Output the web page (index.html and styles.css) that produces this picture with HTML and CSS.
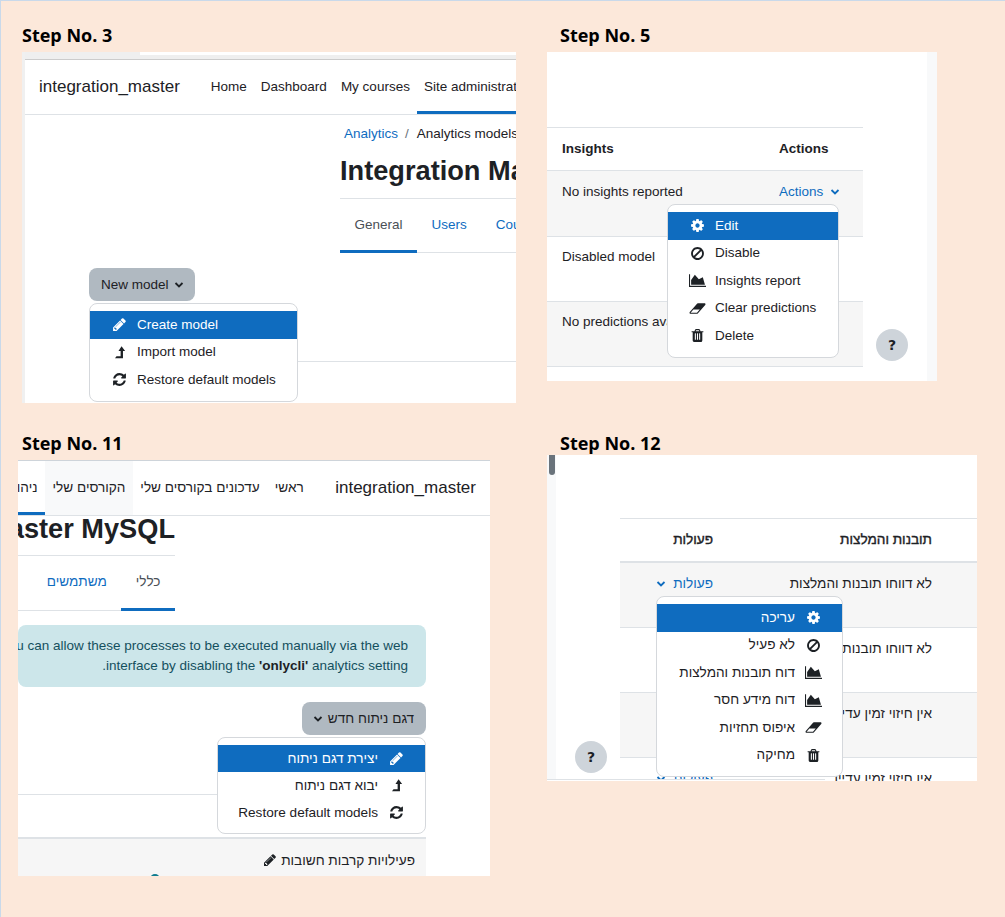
FILE: index.html
```html
<!DOCTYPE html>
<html lang="en">
<head>
<meta charset="utf-8">
<title>Steps</title>
<link rel="stylesheet" href="styles.css">
</head>
<body>
<svg class="defs" xmlns="http://www.w3.org/2000/svg">
  <symbol id="i-pencil" viewBox="0 0 1792 1792"><path d="M491 1536l91-91-235-235-91 91v107h128v128h107zm523-928q0-22-22-22-10 0-17 7l-542 542q-7 7-7 17 0 22 22 22 10 0 17-7l542-542q7-7 7-17zm-54-192l416 416-832 832h-416v-416zm683 96q0 53-37 90l-166 166-416-416 166-165q36-38 90-38 53 0 91 38l235 234q37 39 37 91z"/></symbol>
  <symbol id="i-levelup" viewBox="0 0 16 16"><path d="M10.200 1.200 14 6.400h-2.300V14H3.200l1.600-2h4.400V6.400H6.900z"/></symbol>
  <symbol id="i-refresh" viewBox="0 0 1792 1792"><path d="M1639 1056q0 5-1 7-64 268-268 434.500t-478 166.500q-146 0-282.500-55t-243.500-157l-129 129q-19 19-45 19t-45-19-19-45v-448q0-26 19-45t45-19h448q26 0 45 19t19 45-19 45l-137 137q71 66 161 102t187 36q134 0 250-65t186-179q11-17 53-117 8-23 30-23h192q13 0 22.500 9.500t9.500 22.500zm25-800v448q0 26-19 45t-45 19h-448q-26 0-45-19t-19-45 19-45l138-138q-148-137-349-137-134 0-250 65t-186 179q-11 17-53 117-8 23-30 23h-199q-13 0-22.500-9.500t-9.500-22.500v-7q65-268 270-434.500t480-166.500q146 0 284 55.500t245 156.500l130-129q19-19 45-19t45 19 19 45z"/></symbol>
  <symbol id="i-cog" viewBox="0 0 1792 1792"><path d="M1152 896q0-106-75-181t-181-75-181 75-75 181 75 181 181 75 181-75 75-181zm512-109v222q0 12-8 23t-20 13l-185 28q-19 54-39 91 35 50 107 138 10 12 10 25t-9 23q-27 37-99 108t-94 71q-12 0-26-9l-138-108q-44 23-91 38-16 136-29 186-7 28-36 28h-222q-14 0-24.500-8.500t-11.500-21.500l-28-184q-49-16-90-37l-141 107q-10 9-25 9-14 0-25-11-126-114-165-168-7-10-7-23 0-12 8-23 15-21 51-66.500t54-70.500q-27-50-41-99l-183-27q-13-2-21-12.500t-8-23.500v-222q0-12 8-23t19-13l186-28q14-46 39-92-40-57-107-138-10-12-10-24 0-10 9-23 26-36 98.500-107.500t94.500-71.500q13 0 26 10l138 107q44-23 91-38 16-136 29-186 7-28 36-28h222q14 0 24.500 8.500t11.500 21.500l28 184q49 16 90 37l142-107q9-9 24-9 13 0 25 10 129 119 165 170 7 8 7 22 0 12-8 23-15 21-51 66.500t-54 70.500q26 50 41 98l183 28q13 2 21 12.500t8 23.500z"/></symbol>
  <symbol id="i-ban" viewBox="0 0 1792 1792"><path d="M1440 893q0-161-87-295l-754 753q137 89 297 89 111 0 211.500-43.500t173.500-116.500 116-174.500 43-212.500zm-999 299l755-754q-135-91-300-91-148 0-273 73t-198 199-73 274q0 162 89 299zm1223-299q0 157-61 300t-163.500 246-245 164-298.500 61-298.500-61-245-164-163.500-246-61-300 61-299.500 163.500-245.500 245-164 298.500-61 298.500 61 245 164 163.500 245.500 61 299.500z"/></symbol>
  <symbol id="i-chart" viewBox="0 0 2048 1792"><path d="M2048 1536v128H0V128h128v1408h1920zM1664 512l256 896H256V832l448-640 480 544z"/></symbol>
  <symbol id="i-eraser" viewBox="0 0 2048 1792"><path d="M960 1408l336-384h-768l-336 384h768zm1013-1077q15 34 9.500 71.500t-30.500 65.500l-896 1024q-38 44-96 44h-768q-38 0-69.500-20.500t-47.500-54.500q-15-34-9.500-71.500t30.500-65.500l896-1024q38-44 96-44h768q38 0 70 20.500t47 54.500z"/></symbol>
  <symbol id="i-trash" viewBox="0 0 1792 1792"><path d="M704 1376v-704q0-14-9-23t-23-9h-64q-14 0-23 9t-9 23v704q0 14 9 23t23 9h64q14 0 23-9t9-23zm256 0v-704q0-14-9-23t-23-9h-64q-14 0-23 9t-9 23v704q0 14 9 23t23 9h64q14 0 23-9t9-23zm256 0v-704q0-14-9-23t-23-9h-64q-14 0-23 9t-9 23v704q0 14 9 23t23 9h64q14 0 23-9t9-23zm-544-992h448l-48-117q-7-9-17-11h-317q-10 2-17 11zm928 32v64q0 14-9 23t-23 9h-96v948q0 83-47 143.500t-113 60.500h-832q-66 0-113-58.500t-47-141.500v-952h-96q-14 0-23-9t-9-23v-64q0-14 9-23t23-9h309l70-167q15-37 54-63t79-26h320q40 0 79 26t54 63l70 167h309q14 0 23 9t9 23z"/></symbol>
  <symbol id="i-chev" viewBox="0 0 10 10"><path d="M1.500 3 5 6.500 8.500 3" fill="none" stroke="currentColor" stroke-width="1.800"/></symbol>
</svg>

<section class="step step-3">
  <h2 class="step-title">Step No. 3</h2>
  <div class="panel panel-3">
    <div class="top-strip"><span class="top-cut"></span></div>
    <nav class="nav">
      <span class="brand">integration_master</span>
      <span class="nav-item">Home</span>
      <span class="nav-item">Dashboard</span>
      <span class="nav-item">My courses</span>
      <span class="nav-item active">Site administration</span>
    </nav>
    <div class="page-head">
      <div class="crumbs"><span class="link">Analytics</span><span class="crumb-sep">/</span><span>Analytics models</span></div>
      <h1 class="title">Integration Master MySQL</h1>
      <div class="tabs">
        <span class="tab active">General</span>
        <span class="tab link">Users</span>
        <span class="tab link">Courses</span>
      </div>
    </div>
    <div class="dropdown new-model">
      <div class="btn">New model <svg class="chev"><use href="#i-chev"/></svg></div>
      <div class="menu menu-below">
        <div class="mi on"><svg class="ic"><use href="#i-pencil"/></svg>Create model</div>
        <div class="mi"><svg class="ic"><use href="#i-levelup"/></svg>Import model</div>
        <div class="mi"><svg class="ic"><use href="#i-refresh"/></svg>Restore default models</div>
      </div>
    </div>
    <div class="rule rule-3"></div>
  </div>
</section>

<section class="step step-5">
  <h2 class="step-title">Step No. 5</h2>
  <div class="panel panel-5">
    <div class="main">
      <div class="table table-5">
        <div class="tr th"><span>Insights</span><span>Actions</span></div>
        <div class="tr shade"><span>No insights reported</span>
          <div class="dropdown"><span class="link act">Actions <svg class="chev"><use href="#i-chev"/></svg></span>
            <div class="menu menu-5">
              <div class="mi on"><svg class="ic"><use href="#i-cog"/></svg>Edit</div>
              <div class="mi"><svg class="ic"><use href="#i-ban"/></svg>Disable</div>
              <div class="mi"><svg class="ic"><use href="#i-chart"/></svg>Insights report</div>
              <div class="mi"><svg class="ic"><use href="#i-eraser"/></svg>Clear predictions</div>
              <div class="mi"><svg class="ic"><use href="#i-trash"/></svg>Delete</div>
            </div>
          </div>
        </div>
        <div class="tr"><span>Disabled model</span><span class="link act">Actions <svg class="chev"><use href="#i-chev"/></svg></span></div>
        <div class="tr shade"><span>No predictions available</span><span class="link act">Actions <svg class="chev"><use href="#i-chev"/></svg></span></div>
      </div>
    </div>
    <div class="side-strip"></div>
    <div class="help help-5">?</div>
  </div>
</section>

<section class="step step-11">
  <h2 class="step-title">Step No. 11</h2>
  <div class="panel panel-11" dir="rtl">
    <nav class="nav">
      <span class="brand" dir="ltr">integration_master</span>
      <span class="nav-item">ראשי</span>
      <span class="nav-item">עדכונים בקורסים שלי</span>
      <span class="nav-item hover">הקורסים שלי</span>
      <span class="nav-item active">ניהול האתר</span>
    </nav>
    <div class="page-head">
      <h1 class="title">Integration Master MySQL</h1>
      <div class="tabs">
        <span class="tab active">כללי</span>
        <span class="tab link">משתמשים</span>
        <span class="tab link">קורסים</span>
      </div>
    </div>
    <div class="alert">You can allow these processes to be executed manually via the web<br>interface by disabling the <b>'onlycli'</b> analytics setting.</div>
    <div class="dropdown new-model">
      <div class="btn">דגם ניתוח חדש <svg class="chev"><use href="#i-chev"/></svg></div>
      <div class="menu menu-below">
        <div class="mi on"><svg class="ic"><use href="#i-pencil"/></svg>יצירת דגם ניתוח</div>
        <div class="mi"><svg class="ic"><use href="#i-levelup"/></svg>יבוא דגם ניתוח</div>
        <div class="mi"><svg class="ic"><use href="#i-refresh"/></svg>Restore default models</div>
      </div>
    </div>
    <div class="rule rule-11"></div>
    <div class="activity">
      <div class="activity-name">פעילויות קרבות חשובות <svg class="ic-edit"><use href="#i-pencil"/></svg></div>
      <span class="dot"></span>
    </div>
  </div>
</section>

<section class="step step-12">
  <h2 class="step-title">Step No. 12</h2>
  <div class="panel panel-12" dir="rtl">
    <div class="main">
      <div class="table table-12">
        <div class="tr th"><span>תובנות והמלצות</span><span>פעולות</span></div>
        <div class="tr shade"><span>לא דווחו תובנות והמלצות</span>
          <div class="dropdown"><span class="link act">פעולות <svg class="chev"><use href="#i-chev"/></svg></span>
            <div class="menu menu-12">
              <div class="mi on"><svg class="ic"><use href="#i-cog"/></svg>עריכה</div>
              <div class="mi"><svg class="ic"><use href="#i-ban"/></svg>לא פעיל</div>
              <div class="mi"><svg class="ic"><use href="#i-chart"/></svg>דוח תובנות והמלצות</div>
              <div class="mi"><svg class="ic"><use href="#i-chart"/></svg>דוח מידע חסר</div>
              <div class="mi"><svg class="ic"><use href="#i-eraser"/></svg>איפוס תחזיות</div>
              <div class="mi"><svg class="ic"><use href="#i-trash"/></svg>מחיקה</div>
            </div>
          </div>
        </div>
        <div class="tr"><span>לא דווחו תובנות והמלצות</span><span class="link act">פעולות <svg class="chev"><use href="#i-chev"/></svg></span></div>
        <div class="tr shade"><span>אין חיזוי זמין עדיין</span><span class="link act">פעולות <svg class="chev"><use href="#i-chev"/></svg></span></div>
        <div class="tr"><span>אין חיזוי זמין עדיין</span><span class="link act">פעולות <svg class="chev"><use href="#i-chev"/></svg></span></div>
      </div>
    </div>
    <div class="scroll-track"><span class="scroll-thumb"></span></div>
    <div class="footer-edge"></div>
    <div class="help help-12">?</div>
  </div>
</section>
</body>
</html>
```
FILE: styles.css
```css
* { box-sizing: border-box; }
html, body { margin: 0; padding: 0; }
body {
  width: 1005px;
  height: 917px;
  overflow: hidden;
  background: #fce8da;
  border-left: 1px solid #c9d9ea;
  border-top: 1px solid #c9d9ea;
  padding-top: 23px;
  display: grid;
  grid-template-columns: 546px 1fr;
  grid-auto-rows: 408px;
  font-family: "Liberation Sans", "Noto Sans", sans-serif;
  font-size: 13.5px;
  line-height: 20px;
  color: #1d2125;
}
.defs { position: absolute; width: 0; height: 0; }
.step-title {
  margin: 0;
  height: 22px;
  font-family: "Open Sans", sans-serif;
  font-size: 18px;
  line-height: 22px;
  font-weight: 700;
  color: #000;
}
.step-3 .step-title, .step-11 .step-title { padding-left: 21px; }
.step-5 .step-title, .step-12 .step-title { padding-left: 13px; }

.panel { position: relative; overflow: hidden; background: #fff; margin-top: 6px; }
.panel-3 { margin-left: 21px; width: 494px; height: 351px; border-left: 3px solid #f0f0f0; }
.panel-5 { width: 390px; height: 329px; display: flex; }
.panel-11 { margin-left: 17px; width: 472px; height: 416px; border-top: 1px solid #ced4da; font-size: 13.6px; }
.panel-12 { margin-top: 1px; width: 430px; height: 326px; display: flex; font-size: 13.6px; }

.top-strip { height: 8px; background: #efefef; border-bottom: 1px solid #cccccc; }
.top-cut { display: block; margin-left: 115px; height: 3px; background: #fff; }

.nav { display: flex; align-items: center; height: 55px; border-bottom: 1px solid #dee2e6; white-space: nowrap; }
.panel-3 .nav { padding-left: 14px; }
.panel-11 .nav { padding-right: 14px; }
.brand { font-size: 17px; }
.panel-3 .brand { margin-right: 24px; }
.panel-11 .brand { margin-left: 24px; }
.nav-item { position: relative; display: flex; align-items: center; height: 54px; padding: 0 7px; flex: none; }
.panel-11 .nav-item { padding: 0 7.500px; }
.nav-item.active::after { content: ""; position: absolute; left: 0; right: 0; bottom: 0; height: 3px; background: #0f6cbf; }
.nav-item.hover { background: #f8f9fa; }

.link { color: #0f6cbf; }
.page-head { white-space: nowrap; }
.panel-3 .page-head { margin-left: 315px; padding-top: 9px; }
.panel-11 .page-head { margin-right: 315px; }
.crumbs { height: 20px; padding-left: 4px; }
.crumb-sep { margin: 0 8px 0 7px; color: #6a737b; }
.title { margin: 1px 0 0; height: 54px; font-size: 27.200px; line-height: 36px; font-weight: 700; padding-top: 8px; border-bottom: 1px solid #dee2e6; }
.panel-11 .title { height: 40px; padding-top: 0; margin-top: 0; line-height: 26px; }
.tabs { display: flex; height: 54px; border-bottom: 1px solid #dee2e6; }
.panel-11 .tabs { height: 55px; }
.tab { position: relative; padding: 16px 14.500px 0; flex: none; color: #4a5056; }
.tab.link { color: #0f6cbf; }
.tab.active::after { content: ""; position: absolute; left: 0; right: 0; bottom: -1px; height: 3px; background: #0f6cbf; }

.alert { margin: 14px 64px 0 0; height: 62px; padding: 11px 18px 0; background: #cce6ea; color: #14505e; border-radius: 8px; white-space: nowrap; font-size: 13.5px; }
.alert b { color: #1d2125; }

.dropdown { position: relative; }
.new-model { width: fit-content; }
.panel-3 .new-model { margin: 15px 0 0 64px; }
.panel-11 .new-model { margin: 15px 64px 0 0; }
.btn { display: flex; align-items: center; height: 33px; padding: 0 12px; gap: 5px; background: #b0b9c1; border-radius: 8px; white-space: nowrap; }
.panel-3 .btn { padding-right: 11px; }
.panel-11 .btn { padding-left: 11px; }
.chev { width: 10px; height: 10px; }
.menu { position: absolute; z-index: 2; background: #fff; border: 1px solid #d5d8dc; border-radius: 8px; padding: 7px 0; white-space: nowrap; }
.menu-below { top: 35px; width: 209px; }
.panel-3 .menu-below { left: 0; }
.panel-11 .menu-below { right: 0; }
.menu-5 { top: 22px; left: -112px; width: 172px; }
.menu-12 { top: 22px; right: -130px; width: 187px; }
.mi { display: flex; align-items: center; height: 27.500px; padding-inline-start: 20.500px; gap: 9.500px; }
.panel-11 .mi { height: 27px; }
.mi.on { background: #0f6cbf; color: #fff; }
.ic { width: 17px; height: 15px; fill: currentColor; flex: none; }
.ic-edit { width: 14px; height: 14px; fill: currentColor; vertical-align: -2px; }

.rule { border-top: 1px solid #dee2e6; }
.rule-3 { margin: 60px 0 0 64px; }
.rule-11 { margin: 59px 64px 0 0; }

.main { flex: 1; min-width: 0; }
.side-strip { width: 10px; background: #f8f9fa; }
.table { white-space: nowrap; border-top: 1px solid #dee2e6; }
.table-5 { margin-top: 75px; width: 316px; }
.table-12 { margin-top: 63px; width: 357px; }
.tr { display: grid; height: 65px; padding-top: 11px; border-bottom: 1px solid #dee2e6; }
.table-5 .tr { grid-template-columns: 217px 1fr; padding-left: 15px; }
.table-5 .tr:nth-child(n+3) { padding-top: 10px; }
.table-12 .tr { grid-template-columns: 219px 1fr; padding-right: 45px; }
.tr.th { height: 43px; font-weight: 700; }
.table-5 .tr.th + .tr { height: 66px; }
.table-12 .tr.th { border-bottom-width: 2px; height: 44px; font-weight: 400; -webkit-text-stroke: 0.4px currentColor; }
.shade { background: #f6f6f6; }
.act { white-space: nowrap; }
.act .chev { margin-inline-start: 3px; vertical-align: -1px; }

.help { position: absolute; z-index: 3; width: 32px; height: 32px; border-radius: 50%; background: #ced4da; display: flex; align-items: center; justify-content: center; font-weight: 700; font-size: 14px; font-family: "DejaVu Sans", sans-serif; }
.help-5 { left: 329px; top: 277px; }
.help-12 { left: 28px; top: 286px; }

.scroll-track { width: 9px; background: #f8f9fa; }
.scroll-thumb { display: block; margin: 0 1px 0 2px; height: 20px; background: #6a737b; border-radius: 0 0 3px 3px; }
.footer-edge { position: absolute; z-index: 1; left: 0; bottom: 0; width: 278px; height: 2px; border-top: 1px solid #dee2e6; background: #fff; }

.activity { position: relative; margin: 42px 64px 0 0; height: 60px; padding: 12px 11px 0; background: #f6f6f6; border-top: 2px solid #dee2e6; white-space: nowrap; }
.dot { position: absolute; left: 132px; top: 35px; width: 10px; height: 10px; border-radius: 50%; background: #0f7c8f; }
```
